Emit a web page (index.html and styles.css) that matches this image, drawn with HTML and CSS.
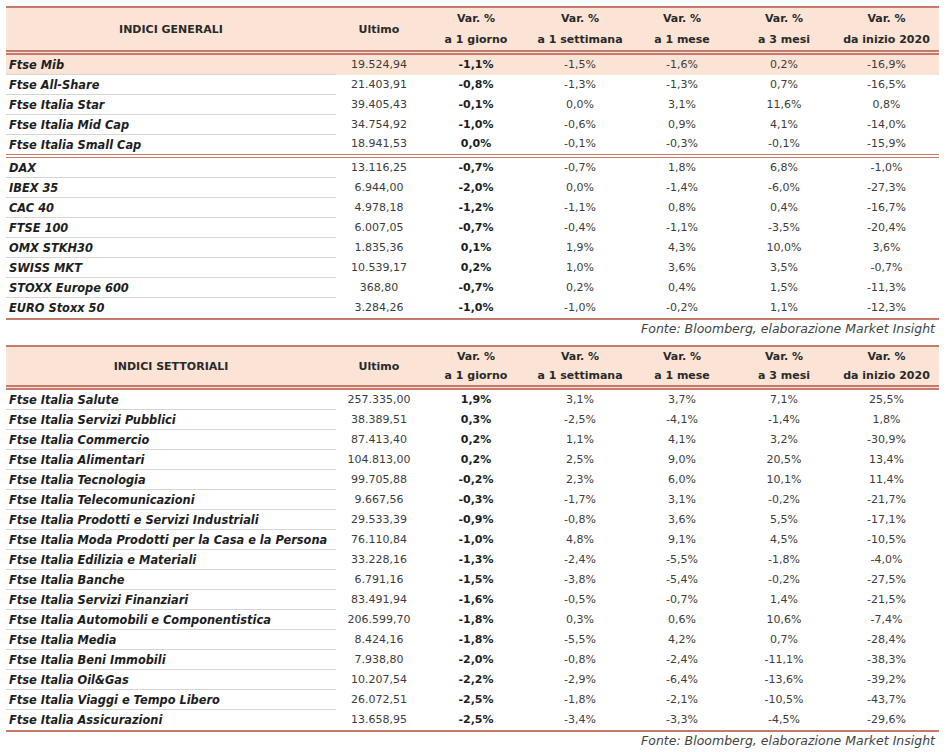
FILE: index.html
```html
<!DOCTYPE html>
<html lang="it">
<head>
<meta charset="utf-8">
<title>Indici</title>
<link rel="stylesheet" href="styles.css">
</head>
<body>
<div class="page">
  <table class="idx">
    <colgroup>
      <col class="c1"><col class="c2"><col class="c3"><col class="c4"><col class="c5"><col class="c6"><col class="c7">
    </colgroup>
    <thead>
      <tr>
        <th>INDICI GENERALI</th>
        <th>Ultimo</th>
        <th>Var. %<br>a 1 giorno</th>
        <th>Var. %<br>a 1 settimana</th>
        <th>Var. %<br>a 1 mese</th>
        <th>Var. %<br>a 3 mesi</th>
        <th>Var. %<br>da inizio 2020</th>
      </tr>
    </thead>
    <tbody>
      <tr class="hl"><td class="name">Ftse Mib</td><td>19.524,94</td><td class="b">-1,1%</td><td>-1,5%</td><td>-1,6%</td><td>0,2%</td><td>-16,9%</td></tr>
      <tr><td class="name">Ftse All-Share</td><td>21.403,91</td><td class="b">-0,8%</td><td>-1,3%</td><td>-1,3%</td><td>0,7%</td><td>-16,5%</td></tr>
      <tr><td class="name">Ftse Italia Star</td><td>39.405,43</td><td class="b">-0,1%</td><td>0,0%</td><td>3,1%</td><td>11,6%</td><td>0,8%</td></tr>
      <tr><td class="name">Ftse Italia Mid Cap</td><td>34.754,92</td><td class="b">-1,0%</td><td>-0,6%</td><td>0,9%</td><td>4,1%</td><td>-14,0%</td></tr>
      <tr class="gend"><td class="name">Ftse Italia Small Cap</td><td>18.941,53</td><td class="b">0,0%</td><td>-0,1%</td><td>-0,3%</td><td>-0,1%</td><td>-15,9%</td></tr>
      <tr><td class="name">DAX</td><td>13.116,25</td><td class="b">-0,7%</td><td>-0,7%</td><td>1,8%</td><td>6,8%</td><td>-1,0%</td></tr>
      <tr><td class="name">IBEX 35</td><td>6.944,00</td><td class="b">-2,0%</td><td>0,0%</td><td>-1,4%</td><td>-6,0%</td><td>-27,3%</td></tr>
      <tr><td class="name">CAC 40</td><td>4.978,18</td><td class="b">-1,2%</td><td>-1,1%</td><td>0,8%</td><td>0,4%</td><td>-16,7%</td></tr>
      <tr><td class="name">FTSE 100</td><td>6.007,05</td><td class="b">-0,7%</td><td>-0,4%</td><td>-1,1%</td><td>-3,5%</td><td>-20,4%</td></tr>
      <tr><td class="name">OMX STKH30</td><td>1.835,36</td><td class="b">0,1%</td><td>1,9%</td><td>4,3%</td><td>10,0%</td><td>3,6%</td></tr>
      <tr><td class="name">SWISS MKT</td><td>10.539,17</td><td class="b">0,2%</td><td>1,0%</td><td>3,6%</td><td>3,5%</td><td>-0,7%</td></tr>
      <tr><td class="name">STOXX Europe 600</td><td>368,80</td><td class="b">-0,7%</td><td>0,2%</td><td>0,4%</td><td>1,5%</td><td>-11,3%</td></tr>
      <tr class="last"><td class="name">EURO Stoxx 50</td><td>3.284,26</td><td class="b">-1,0%</td><td>-1,0%</td><td>-0,2%</td><td>1,1%</td><td>-12,3%</td></tr>
    </tbody>
  </table>
  <p class="src">Fonte: Bloomberg, elaborazione Market Insight</p>

  <table class="idx second">
    <colgroup>
      <col class="c1"><col class="c2"><col class="c3"><col class="c4"><col class="c5"><col class="c6"><col class="c7">
    </colgroup>
    <thead>
      <tr>
        <th>INDICI SETTORIALI</th>
        <th>Ultimo</th>
        <th>Var. %<br>a 1 giorno</th>
        <th>Var. %<br>a 1 settimana</th>
        <th>Var. %<br>a 1 mese</th>
        <th>Var. %<br>a 3 mesi</th>
        <th>Var. %<br>da inizio 2020</th>
      </tr>
    </thead>
    <tbody>
      <tr><td class="name">Ftse Italia Salute</td><td>257.335,00</td><td class="b">1,9%</td><td>3,1%</td><td>3,7%</td><td>7,1%</td><td>25,5%</td></tr>
      <tr><td class="name">Ftse Italia Servizi Pubblici</td><td>38.389,51</td><td class="b">0,3%</td><td>-2,5%</td><td>-4,1%</td><td>-1,4%</td><td>1,8%</td></tr>
      <tr><td class="name">Ftse Italia Commercio</td><td>87.413,40</td><td class="b">0,2%</td><td>1,1%</td><td>4,1%</td><td>3,2%</td><td>-30,9%</td></tr>
      <tr><td class="name">Ftse Italia Alimentari</td><td>104.813,00</td><td class="b">0,2%</td><td>2,5%</td><td>9,0%</td><td>20,5%</td><td>13,4%</td></tr>
      <tr><td class="name">Ftse Italia Tecnologia</td><td>99.705,88</td><td class="b">-0,2%</td><td>2,3%</td><td>6,0%</td><td>10,1%</td><td>11,4%</td></tr>
      <tr><td class="name">Ftse Italia Telecomunicazioni</td><td>9.667,56</td><td class="b">-0,3%</td><td>-1,7%</td><td>3,1%</td><td>-0,2%</td><td>-21,7%</td></tr>
      <tr><td class="name">Ftse Italia Prodotti e Servizi Industriali</td><td>29.533,39</td><td class="b">-0,9%</td><td>-0,8%</td><td>3,6%</td><td>5,5%</td><td>-17,1%</td></tr>
      <tr><td class="name">Ftse Italia Moda Prodotti per la Casa e la Persona</td><td>76.110,84</td><td class="b">-1,0%</td><td>4,8%</td><td>9,1%</td><td>4,5%</td><td>-10,5%</td></tr>
      <tr><td class="name">Ftse Italia Edilizia e Materiali</td><td>33.228,16</td><td class="b">-1,3%</td><td>-2,4%</td><td>-5,5%</td><td>-1,8%</td><td>-4,0%</td></tr>
      <tr><td class="name">Ftse Italia Banche</td><td>6.791,16</td><td class="b">-1,5%</td><td>-3,8%</td><td>-5,4%</td><td>-0,2%</td><td>-27,5%</td></tr>
      <tr><td class="name">Ftse Italia Servizi Finanziari</td><td>83.491,94</td><td class="b">-1,6%</td><td>-0,5%</td><td>-0,7%</td><td>1,4%</td><td>-21,5%</td></tr>
      <tr><td class="name">Ftse Italia Automobili e Componentistica</td><td>206.599,70</td><td class="b">-1,8%</td><td>0,3%</td><td>0,6%</td><td>10,6%</td><td>-7,4%</td></tr>
      <tr><td class="name">Ftse Italia Media</td><td>8.424,16</td><td class="b">-1,8%</td><td>-5,5%</td><td>4,2%</td><td>0,7%</td><td>-28,4%</td></tr>
      <tr><td class="name">Ftse Italia Beni Immobili</td><td>7.938,80</td><td class="b">-2,0%</td><td>-0,8%</td><td>-2,4%</td><td>-11,1%</td><td>-38,3%</td></tr>
      <tr><td class="name">Ftse Italia Oil&amp;Gas</td><td>10.207,54</td><td class="b">-2,2%</td><td>-2,9%</td><td>-6,4%</td><td>-13,6%</td><td>-39,2%</td></tr>
      <tr><td class="name">Ftse Italia Viaggi e Tempo Libero</td><td>26.072,51</td><td class="b">-2,5%</td><td>-1,8%</td><td>-2,1%</td><td>-10,5%</td><td>-43,7%</td></tr>
      <tr class="last"><td class="name">Ftse Italia Assicurazioni</td><td>13.658,95</td><td class="b">-2,5%</td><td>-3,4%</td><td>-3,3%</td><td>-4,5%</td><td>-29,6%</td></tr>
    </tbody>
  </table>
  <p class="src">Fonte: Bloomberg, elaborazione Market Insight</p>
</div>
</body>
</html>
```

FILE: styles.css
```css
html, body {
  margin: 0;
  padding: 0;
  background: #ffffff;
}

.page {
  padding: 6px 7px 0 6px;
  font-family: "DejaVu Sans", "Liberation Sans", sans-serif;
  color: #2b2b2b;
}

.idx {
  width: 933px;
  table-layout: fixed;
  border-collapse: collapse;
  border-top: 2px solid #c7796a;
  border-bottom: 2px solid #c7796a;
  font-size: 11px;
}

.c1 { width: 330px; }
.c2 { width: 86px; }
.c3 { width: 108px; }
.c4 { width: 100px; }
.c5 { width: 104px; }
.c6 { width: 100px; }
.c7 { width: 105px; }

.idx thead th {
  background: #fbe3d5;
  height: 40px;
  padding: 0;
  font-weight: bold;
  font-size: 11px;
  line-height: 21px;
  color: #2a2a2a;
  text-align: center;
  vertical-align: middle;
  border-bottom: 5px double #c7796a;
}

.idx.second thead th {
  height: 37px;
  line-height: 19px;
}

.idx tbody td {
  height: 19px;
  padding: 0;
  text-align: center;
  vertical-align: middle;
  color: #3c3c3c;
  white-space: nowrap;
  line-height: 14px;
}

.idx tbody td.name {
  text-align: left;
  padding-left: 3px;
  font-weight: bold;
  font-style: italic;
  font-size: 11.4px;
  color: #1e1e1e;
  border-bottom: 1px solid #d6d6d6;
}

.idx tbody td.b {
  font-weight: bold;
  color: #1e1e1e;
}

.idx tbody tr.hl td {
  background: #fbe3d5;
}

.idx tbody tr.gend td,
.idx tbody tr.gend td.name {
  border-bottom: 4px double #c7796a;
}

.idx tbody tr.last td {
  height: 20px;
}

.idx tbody tr.last td.name {
  border-bottom: none;
}

.src {
  margin: 0 0 7px 0;
  width: 929px;
  text-align: right;
  font-style: italic;
  font-size: 12.5px;
  line-height: 18px;
  color: #444444;
}
```
